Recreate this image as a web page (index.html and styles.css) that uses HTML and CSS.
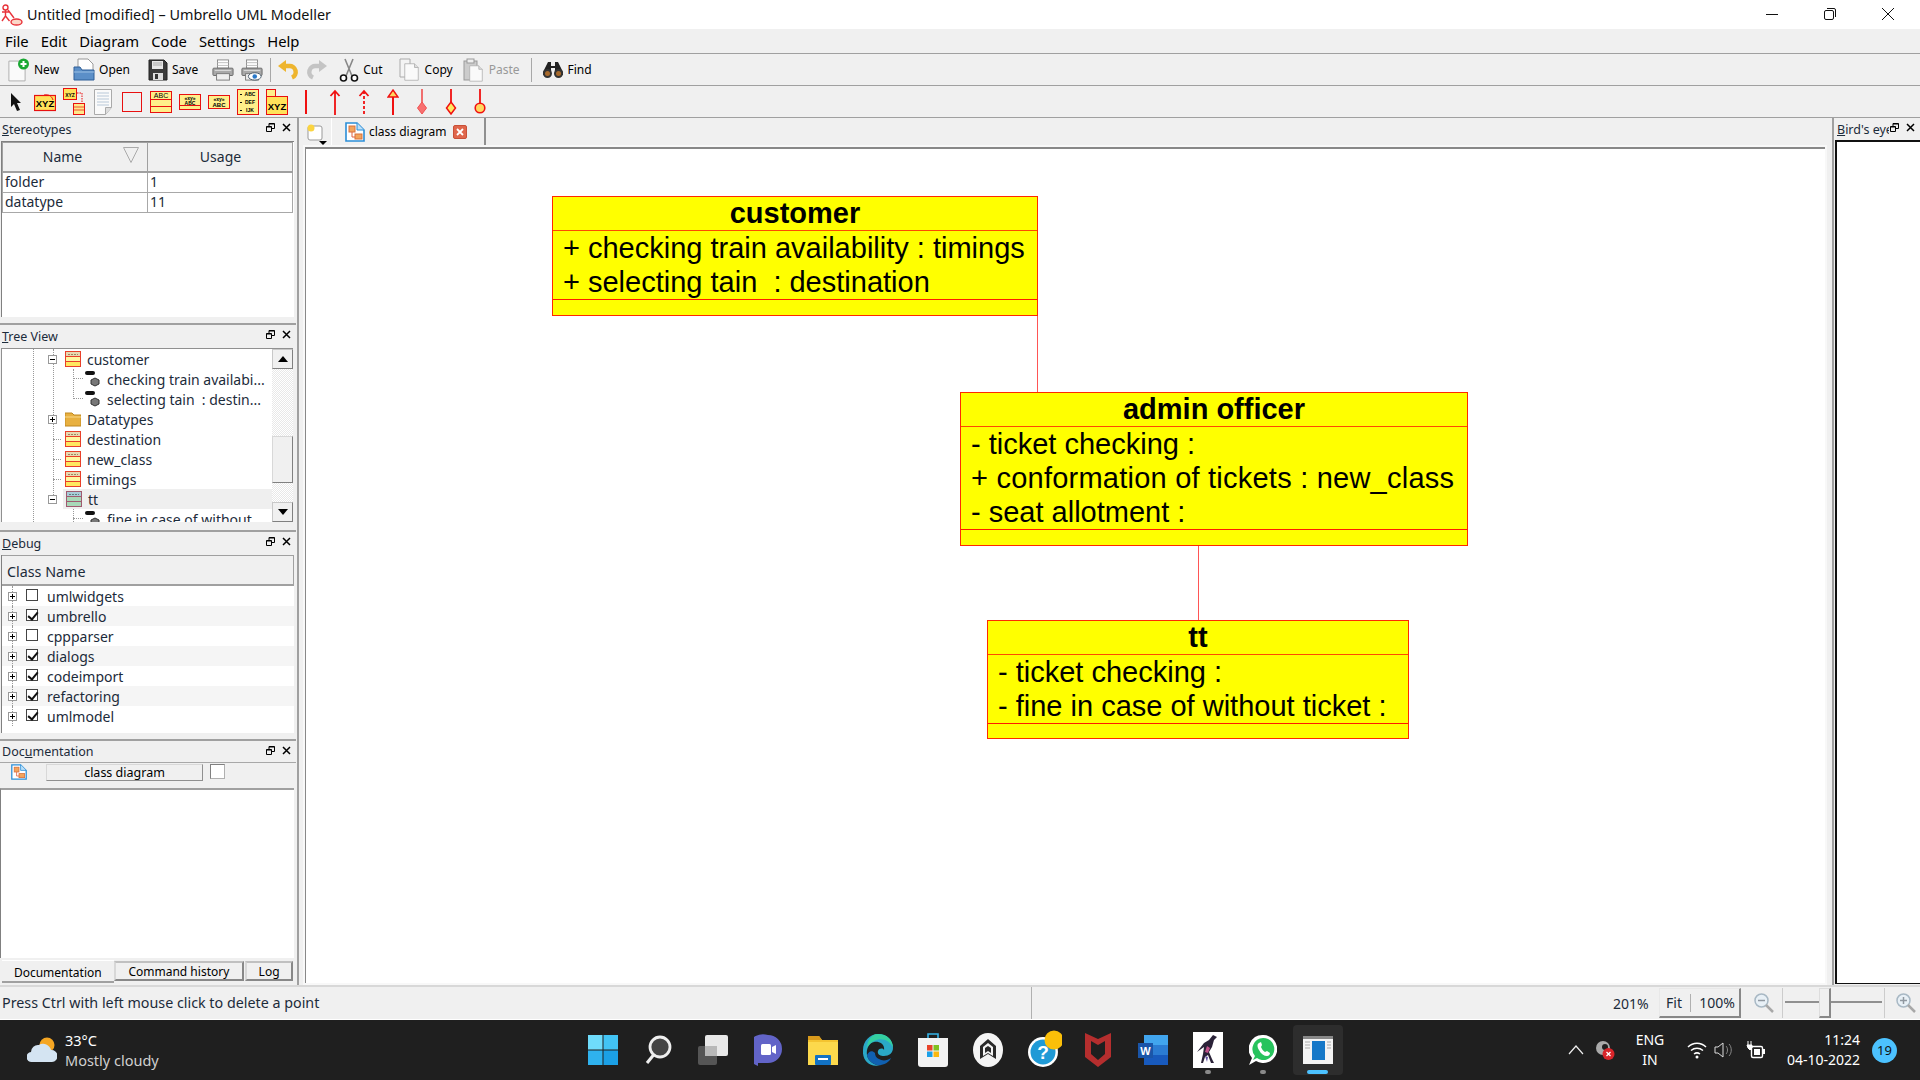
FILE: index.html
```html
<!DOCTYPE html>
<html lang="en">
<head>
<meta charset="utf-8">
<title>Untitled [modified] – Umbrello UML Modeller</title>
<link rel="stylesheet" href="styles.css">
</head>
<body>
<svg class="defs" width="0" height="0" aria-hidden="true">
  <symbol id="cls" viewBox="0 0 16 16"><rect x=".5" y=".5" width="15" height="15" fill="#fff7a0" stroke="#e8402a"/><rect x="1" y="1" width="14" height="4" fill="#e8d8b0"/><path d="M1 5.500h14M1 10.500h14" stroke="#e8402a"/><rect x="1" y="11" width="14" height="4" fill="#ffe860"/><path d="M3 3.500h10" stroke="#a08860" stroke-dasharray="2 1"/></symbol>
  <symbol id="clsg" viewBox="0 0 16 16"><rect x=".5" y=".5" width="15" height="15" fill="#a8d8b8" stroke="#a05a70"/><rect x="1" y="1" width="14" height="4" fill="#a8ccd8"/><path d="M1 5.500h14M1 10.500h14" stroke="#a05a70"/><path d="M3 3.500h10" stroke="#608080" stroke-dasharray="2 1"/></symbol>
  <symbol id="attr" viewBox="0 0 16 16"><rect x="0" y="0" width="10" height="4" rx="2" fill="#111"/><path d="M10 7l4 2v4l-4 2-4-2V9z" fill="#777" stroke="#333"/></symbol>
  <symbol id="plus" viewBox="0 0 9 9"><rect x=".5" y=".5" width="8" height="8" fill="#fff" stroke="#999"/><path d="M2 4.500h5M4.500 2v5" stroke="#000"/></symbol>
  <symbol id="minus" viewBox="0 0 9 9"><rect x=".5" y=".5" width="8" height="8" fill="#fff" stroke="#999"/><path d="M2 4.500h5" stroke="#000"/></symbol>
  <symbol id="diag" viewBox="0 0 20 20"><path d="M1 1h11l7 7v11H1z" fill="#fff" stroke="#2b8ed8" stroke-width="1.600"/><path d="M12 1v7h7" fill="#bde0f8" stroke="#2b8ed8"/><rect x="4" y="4" width="6" height="6" fill="#f2a45c" stroke="#d8703c"/><rect x="10" y="12" width="7" height="5" fill="#f2a45c" stroke="#d8703c"/><path d="M7 10v5h3" fill="none" stroke="#e06040"/></symbol>
  <symbol id="float" viewBox="0 0 9 9"><path d="M.5 3.500h5v5h-5zM3 3V.5h5.500v5H6" fill="none" stroke="#000"/><path d="M.5 4h5M3 1h5.500" stroke="#000"/></symbol>
  <symbol id="shut" viewBox="0 0 9 9"><path d="M1 1l7 7M8 1l-7 7" stroke="#000" stroke-width="1.500"/></symbol>
  <symbol id="page" viewBox="0 0 20 24"><path d="M1 1h13l5 5v17H1z" fill="#fafafa" stroke="#a8a8a8"/><path d="M14 1v5h5" fill="#ddd" stroke="#a8a8a8"/></symbol>
  <symbol id="printer" viewBox="0 0 24 24"><rect x="6" y="1" width="12" height="9" fill="#fff" stroke="#888"/><path d="M6 4h12M6 7h12" stroke="#bbb"/><rect x="1" y="10" width="22" height="8" rx="1" fill="#a8a8a8" stroke="#666"/><rect x="5" y="16" width="14" height="7" fill="#eee" stroke="#777"/><path d="M3 12.500h18" stroke="#ddd"/></symbol>
</svg>

<header class="titlebar">
  <svg class="app-icon" width="22" height="22" viewBox="0 0 22 22"><circle cx="4.500" cy="3.500" r="2.500" fill="none" stroke="#e8333a" stroke-width="1.400"/><path d="M4.500 6v6M1 8h7M1 17l3.500-5 4 5M7 6l6 8" fill="none" stroke="#e8333a" stroke-width="1.400"/><ellipse cx="15.500" cy="18" rx="5.500" ry="3" fill="#fbd7c8" stroke="#e8333a" stroke-width="1.400"/></svg>
  <span class="title-text">Untitled [modified] – Umbrello UML Modeller</span>
  <div class="win-controls">
    <svg width="12" height="12" viewBox="0 0 12 12"><path d="M0 6.500h12" stroke="#111"/></svg>
    <svg width="12" height="12" viewBox="0 0 12 12"><rect x=".5" y="2.500" width="9" height="9" rx="1.500" fill="none" stroke="#111"/><path d="M3 .5h7a1.500 1.500 0 0 1 1.500 1.500v7" fill="none" stroke="#111"/></svg>
    <svg width="12" height="12" viewBox="0 0 12 12"><path d="M0 0l12 12M12 0L0 12" stroke="#111"/></svg>
  </div>
</header>

<nav class="menubar">
  <span>File</span><span>Edit</span><span>Diagram</span><span>Code</span><span>Settings</span><span>Help</span>
</nav>

<div class="toolbar">
  <div class="tool t-new"><svg width="22" height="24" viewBox="0 0 22 24"><use href="#page" x="0" y="2" width="18" height="22"/><circle cx="15.500" cy="6" r="5.500" fill="#1aa833"/><path d="M12.500 6h6M15.500 3v6" stroke="#fff" stroke-width="2"/></svg><span>New</span></div>
  <div class="tool t-open"><svg width="22" height="24" viewBox="0 0 22 24"><path d="M5 1h10l5 5v9H5z" fill="#fff" stroke="#999"/><path d="M1 9h6l2 3h12v10H1z" fill="#5b8fc8" stroke="#2f5f98"/><path d="M1 14h20" stroke="#9cc0e4"/></svg><span>Open</span></div>
  <div class="tool t-save"><svg width="20" height="22" viewBox="0 0 20 22"><path d="M1 1h15l3 3v17H1z" fill="#3a3a3a" stroke="#222"/><rect x="4" y="2" width="11" height="8" fill="#e8e8e8"/><path d="M5 4h9M5 6h9" stroke="#aaa"/><rect x="5" y="14" width="10" height="7" fill="#ddd"/><rect x="7" y="15" width="3" height="5" fill="#333"/></svg><span>Save</span></div>
  <div class="tool t-print"><svg width="22" height="24" viewBox="0 0 24 24"><use href="#printer"/></svg></div>
  <div class="tool t-prev"><svg width="22" height="24" viewBox="0 0 24 24"><use href="#printer"/><ellipse cx="15" cy="19" rx="7" ry="4" fill="#fff" stroke="#456"/><circle cx="15" cy="19" r="2.500" fill="#2a78c8"/></svg></div>
  <i class="tsep"></i>
  <div class="tool t-undo"><svg width="22" height="22" viewBox="0 0 22 22"><path d="M7 7h5a6 6 0 0 1 3 11.500" fill="none" stroke="#eeb52e" stroke-width="4.500"/><path d="M1 7l8-6v12z" fill="#eeb52e"/></svg></div>
  <div class="tool t-redo"><svg width="22" height="22" viewBox="0 0 22 22"><path d="M15 7h-5a6 6 0 0 0-3 11.500" fill="none" stroke="#c4c4c4" stroke-width="4.500"/><path d="M21 7l-8-6v12z" fill="#c4c4c4"/></svg></div>
  <div class="tool t-cut"><svg width="20" height="24" viewBox="0 0 20 24"><path d="M6 1l7 17M14 1L7 18" stroke="#888" stroke-width="1.600"/><circle cx="4.500" cy="20" r="3" fill="#fff" stroke="#111" stroke-width="1.600"/><circle cx="15.500" cy="20" r="3" fill="#fff" stroke="#111" stroke-width="1.600"/></svg><span>Cut</span></div>
  <div class="tool t-copy"><svg width="20" height="24" viewBox="0 0 20 24"><path d="M1 1h10v18H1z" fill="#f4f4f4" stroke="#aaa"/><use href="#page" x="5" y="4" width="15" height="20"/></svg><span>Copy</span></div>
  <div class="tool t-paste dim"><svg width="20" height="24" viewBox="0 0 20 24"><rect x="1" y="3" width="13" height="19" fill="#ccc" stroke="#999"/><rect x="4" y="1" width="7" height="4" fill="#eee" stroke="#999"/><use href="#page" x="6" y="7" width="14" height="17"/></svg><span>Paste</span></div>
  <i class="tsep sep2"></i>
  <div class="tool t-find"><svg width="22" height="18" viewBox="0 0 22 18"><path d="M6 1h3v4h4V1h3l5 10v3H13V7H9v7H1v-3z" fill="#222"/><circle cx="5.500" cy="12.500" r="4.500" fill="#333"/><circle cx="16.500" cy="12.500" r="4.500" fill="#333"/><circle cx="5.500" cy="12.500" r="2.500" fill="#a86a2c"/><circle cx="16.500" cy="12.500" r="2.500" fill="#a86a2c"/></svg><span>Find</span></div>
</div>

<div class="toolbar2">
  <svg class="w-arrow" width="12" height="22" viewBox="0 0 12 22"><path d="M1 2v14l3-3 3 7 3-1-3-7h4z" fill="#111"/></svg>
  <svg width="22" height="20" viewBox="0 0 22 20"><rect x=".5" y="3.500" width="21" height="15" fill="#ffe25a" stroke="#e81010" stroke-width="1.200"/><path d="M10 3c6-1 8 2 9 5" fill="none" stroke="#e81010"/><text x="11" y="15" class="svgt b9">XYZ</text></svg>
  <svg width="22" height="27" viewBox="0 0 22 27"><rect x=".5" y=".5" width="13" height="11" fill="#ffe25a" stroke="#e81010"/><text x="7" y="8.500" class="svgt b5">XYZ</text><path d="M14 5h5v11" stroke="#e81010" fill="none" stroke-dasharray="1.500 1"/><rect x="10.500" y="15.500" width="11" height="11" fill="#ffe88a" stroke="#e81010"/><path d="M11 19h10M11 22h10" stroke="#e81010" stroke-width=".7"/></svg>
  <svg class="c18" width="18" height="26" viewBox="0 0 18 26"><path d="M.5.5h17v18l-6 7H.5z" fill="#fafafa" stroke="#aaa"/><path d="M3 4h12M3 7h12M3 10h12M3 13h12M3 16h12" stroke="#b8c8d8"/><path d="M11.500 25.500v-7h6" fill="#ddd" stroke="#aaa"/></svg>
  <svg class="c20" width="20" height="20" viewBox="0 0 20 20"><rect x=".5" y=".5" width="19" height="19" fill="#f0f0f0" stroke="#e81010"/></svg>
  <svg width="22" height="22" viewBox="0 0 22 22"><rect x=".5" y=".5" width="21" height="21" fill="#ffef8a" stroke="#e81010"/><path d="M0 8.500h22M0 15.500h22" stroke="#e81010"/><text x="11" y="7" class="svgt n7">ABC</text></svg>
  <svg width="22" height="16" viewBox="0 0 22 16"><rect x=".5" y=".5" width="21" height="15" fill="#ffef8a" stroke="#e81010"/><path d="M0 11.500h22" stroke="#e81010"/><text x="11" y="6" class="svgt b5">«xy»</text><text x="11" y="10.500" class="svgt b5">ABC</text></svg>
  <svg width="22" height="14" viewBox="0 0 22 14"><rect x=".5" y=".5" width="21" height="13" fill="#ffef8a" stroke="#e81010"/><text x="11" y="6" class="svgt b5">«xy»</text><text x="11" y="12" class="svgt b6">ABC</text></svg>
  <svg width="22" height="26" viewBox="0 0 22 26"><rect x=".5" y=".5" width="21" height="25" fill="#ffef8a" stroke="#e81010"/><text x="13" y="7" class="svgt b5">ABC</text><text x="13" y="15" class="svgt b5">DEF</text><text x="13" y="23" class="svgt b5">IJK</text><path d="M3 5.500h2M3 13.500h2M3 21.500h2" stroke="#111"/></svg>
  <svg width="22" height="26" viewBox="0 0 22 26"><rect x=".5" y=".5" width="9" height="7" fill="#ffef8a" stroke="#e81010"/><rect x=".5" y="7.500" width="21" height="18" fill="#ffe25a" stroke="#e81010"/><text x="11" y="21" class="svgt b9">XYZ</text></svg>
  <svg class="rel rel-first" width="12" height="26" viewBox="0 0 12 26"><path d="M6 1v24" stroke="#f01010" stroke-width="2"/></svg>
  <svg class="rel" width="12" height="26" viewBox="0 0 12 26"><path d="M6 2v24M1.500 7L6 2l4.500 5" stroke="#f01010" stroke-width="1.800" fill="none"/></svg>
  <svg class="rel" width="12" height="26" viewBox="0 0 12 26"><path d="M6 2v24" stroke="#f01010" stroke-width="1.800" stroke-dasharray="3 2"/><path d="M1.500 7L6 2l4.500 5" stroke="#f01010" stroke-width="1.800" fill="none"/></svg>
  <svg class="rel" width="12" height="26" viewBox="0 0 12 26"><path d="M6 8v18" stroke="#f01010" stroke-width="2"/><path d="M6 1l5 7H1z" fill="#ffd860" stroke="#f01010" stroke-width="1.400"/></svg>
  <svg class="rel" width="12" height="26" viewBox="0 0 12 26"><path d="M6 0v14" stroke="#f06060" stroke-width="1.800"/><path d="M6 13l4.500 6L6 25l-4.500-6z" fill="#f87070" stroke="#f05050"/></svg>
  <svg class="rel" width="12" height="26" viewBox="0 0 12 26"><path d="M6 0v14" stroke="#f01010" stroke-width="1.800"/><path d="M6 13l4.500 6L6 25l-4.500-6z" fill="#ffe860" stroke="#f01010" stroke-width="1.500"/></svg>
  <svg class="rel" width="12" height="26" viewBox="0 0 12 26"><path d="M6 0v14" stroke="#f01010" stroke-width="1.800"/><circle cx="6" cy="19" r="4.800" fill="#ffd860" stroke="#f01010" stroke-width="1.600"/></svg>
</div>

<main class="workspace">
  <aside class="dock-left">
    <section class="panel p-stereo">
      <div class="panel-title"><span><u>S</u>tereotypes</span><span class="panel-btns"><svg width="9" height="9"><use href="#float"/></svg><svg width="9" height="9"><use href="#shut"/></svg></span></div>
      <div class="panel-body">
        <table class="stereo">
          <thead><tr><th class="sorted">Name<svg class="sort" width="16" height="16" viewBox="0 0 16 16"><path d="M.5 .5h15L8 15.500z" fill="none" stroke="#aaa"/></svg></th><th>Usage</th></tr></thead>
          <tbody><tr><td>folder</td><td>1</td></tr><tr><td>datatype</td><td>11</td></tr></tbody>
        </table>
      </div>
    </section>

    <section class="panel p-tree">
      <div class="panel-title"><span><u>T</u>ree View</span><span class="panel-btns"><svg width="9" height="9"><use href="#float"/></svg><svg width="9" height="9"><use href="#shut"/></svg></span></div>
      <div class="tree">
        <div class="tree-list">
          <i class="vdot v1"></i><i class="vdot v2"></i><i class="vdot v3"></i><i class="vdot v4"></i>
          <div class="trow"><svg class="exp" width="9" height="9"><use href="#minus"/></svg><svg class="ic16" width="16" height="16"><use href="#cls"/></svg><span>customer</span></div>
          <div class="trow child"><svg class="ic16" width="16" height="16"><use href="#attr"/></svg><span>checking train availabi...</span></div>
          <div class="trow child"><svg class="ic16" width="16" height="16"><use href="#attr"/></svg><span>selecting tain  : destin...</span></div>
          <div class="trow"><svg class="exp" width="9" height="9"><use href="#plus"/></svg><svg class="ic16" width="16" height="16" viewBox="0 0 16 16"><path d="M0 2h7l2 2h7v11H0z" fill="#e8b040" stroke="#c08820"/><path d="M0 6h16" stroke="#f8d888"/></svg><span>Datatypes</span></div>
          <div class="trow leaf"><svg class="ic16" width="16" height="16"><use href="#cls"/></svg><span>destination</span></div>
          <div class="trow leaf"><svg class="ic16" width="16" height="16"><use href="#cls"/></svg><span>new_class</span></div>
          <div class="trow leaf"><svg class="ic16" width="16" height="16"><use href="#cls"/></svg><span>timings</span></div>
          <div class="trow current"><svg class="exp" width="9" height="9"><use href="#minus"/></svg><svg class="ic16" width="16" height="16"><use href="#clsg"/></svg><span>tt</span></div>
          <div class="trow child"><svg class="ic16" width="16" height="16"><use href="#attr"/></svg><span>fine in case of without</span></div>
        </div>
        <div class="scrollbar">
          <div class="sb-btn"><svg width="10" height="6" viewBox="0 0 10 6"><path d="M5 0l5 6H0z" fill="#000"/></svg></div>
          <div class="sb-track"><div class="sb-thumb"></div></div>
          <div class="sb-btn"><svg width="10" height="6" viewBox="0 0 10 6"><path d="M0 0h10L5 6z" fill="#000"/></svg></div>
        </div>
      </div>
    </section>

    <section class="panel p-debug">
      <div class="panel-title"><span><u>D</u>ebug</span><span class="panel-btns"><svg width="9" height="9"><use href="#float"/></svg><svg width="9" height="9"><use href="#shut"/></svg></span></div>
      <div class="debug">
        <div class="debug-head">Class Name</div>
        <div class="drow"><svg class="exp" width="9" height="9"><use href="#plus"/></svg><i class="check"></i><span>umlwidgets</span></div>
        <div class="drow alt"><svg class="exp" width="9" height="9"><use href="#plus"/></svg><i class="check on"></i><span>umbrello</span></div>
        <div class="drow"><svg class="exp" width="9" height="9"><use href="#plus"/></svg><i class="check"></i><span>cppparser</span></div>
        <div class="drow alt"><svg class="exp" width="9" height="9"><use href="#plus"/></svg><i class="check on"></i><span>dialogs</span></div>
        <div class="drow"><svg class="exp" width="9" height="9"><use href="#plus"/></svg><i class="check on"></i><span>codeimport</span></div>
        <div class="drow alt"><svg class="exp" width="9" height="9"><use href="#plus"/></svg><i class="check on"></i><span>refactoring</span></div>
        <div class="drow"><svg class="exp" width="9" height="9"><use href="#plus"/></svg><i class="check on"></i><span>umlmodel</span></div>
      </div>
    </section>

    <section class="panel p-doc">
      <div class="panel-title doc-title"><span>Doc<u>u</u>mentation</span><span class="panel-btns"><svg width="9" height="9"><use href="#float"/></svg><svg width="9" height="9"><use href="#shut"/></svg></span></div>
      <div class="doc-bar"><svg width="16" height="16"><use href="#diag"/></svg><span class="doc-name">class diagram</span><i class="doc-check"></i></div>
      <div class="doc-text"></div>
      <div class="doc-tabs"><span class="dt active">Documentation</span><span class="dt d2">Command history</span><span class="dt d3">Log</span></div>
    </section>
  </aside>

  <div class="splitter"></div>

  <section class="center">
    <div class="tabbar">
      <svg class="new-tab" width="22" height="24" viewBox="0 0 22 24"><rect x="2" y="4" width="14" height="14" rx="2" fill="#fff" stroke="#999"/><circle cx="5" cy="6" r="3.500" fill="#fbd440"/><path d="M13 19h8l-4 4z" fill="#000"/></svg>
      <div class="doc-tab"><svg width="20" height="20"><use href="#diag"/></svg><span>class diagram</span><svg class="tab-close" width="14" height="14" viewBox="0 0 14 14"><rect x=".5" y=".5" width="13" height="13" rx="1.500" fill="#e0664c" stroke="#c85038"/><path d="M4 4l6 6M10 4l-6 6" stroke="#fff" stroke-width="1.800"/></svg></div>
    </div>
    <div class="canvas">
      <i class="assoc a1"></i><i class="assoc a2"></i>
      <div class="uml n-customer">
        <div class="uml-name">customer</div>
        <div class="uml-attrs"><div>+ checking train availability : timings</div><div>+ selecting tain  : destination</div></div>
        <div class="uml-ops"></div>
      </div>
      <div class="uml n-admin">
        <div class="uml-name">admin officer</div>
        <div class="uml-attrs"><div>- ticket checking :</div><div class="wide">+ conformation of tickets : new_class</div><div>- seat allotment :</div></div>
        <div class="uml-ops"></div>
      </div>
      <div class="uml n-tt">
        <div class="uml-name">tt</div>
        <div class="uml-attrs"><div>- ticket checking :</div><div>- fine in case of without ticket :</div></div>
        <div class="uml-ops"></div>
      </div>
    </div>
  </section>

  <div class="splitter s-right"></div>

  <aside class="dock-right">
    <div class="panel-title birds"><span class="birds-name"><u>B</u>ird's eye</span><span class="panel-btns"><svg width="9" height="9"><use href="#float"/></svg><svg width="9" height="9"><use href="#shut"/></svg></span></div>
    <div class="birds-view"></div>
  </aside>
</main>

<footer class="statusbar">
  <div class="status-msg">Press Ctrl with left mouse click to delete a point</div>
  <div class="status-zoom">
    <span class="pct">201%</span>
    <div class="zoom-btns"><span>Fit</span><i></i><span>100%</span></div>
    <svg class="zm" width="22" height="22" viewBox="0 0 22 22"><circle cx="8.500" cy="8.500" r="6.500" fill="#e8f0f6" stroke="#a8b8c4" stroke-width="1.500"/><path d="M5 8.500h7" stroke="#9098a0" stroke-width="1.500"/><path d="M13 13l7 7" stroke="#a8a8a8" stroke-width="2.500"/></svg>
    <div class="slider"><i class="track"></i><i class="handle"></i></div>
    <svg class="zm" width="22" height="22" viewBox="0 0 22 22"><circle cx="8.500" cy="8.500" r="6.500" fill="#e8f0f6" stroke="#a8b8c4" stroke-width="1.500"/><path d="M5 8.500h7M8.500 5v7" stroke="#9098a0" stroke-width="1.500"/><path d="M13 13l7 7" stroke="#a8a8a8" stroke-width="2.500"/></svg>
  </div>
</footer>

<footer class="taskbar">
  <div class="weather">
    <svg width="30" height="28" viewBox="0 0 30 28"><circle cx="20" cy="9" r="7.500" fill="#f5a623"/><path d="M5 26a5 5 0 0 1-1-10 7 7 0 0 1 8-7 8 8 0 0 1 12 5 6 6 0 0 1 1 12z" fill="#d4e4f2"/></svg>
    <div class="w-text"><div>33°C</div><div class="w-sub">Mostly cloudy</div></div>
  </div>
  <div class="apps">
    <div class="app"><svg width="30" height="30" viewBox="0 0 30 30"><rect width="14.500" height="14.500" fill="#6fdcfb"/><rect x="15.500" width="14.500" height="14.500" fill="#42c4f5"/><rect y="15.500" width="14.500" height="14.500" fill="#2fb2ee"/><rect x="15.500" y="15.500" width="14.500" height="14.500" fill="#1ba0e6"/></svg></div>
    <div class="app"><svg width="28" height="30" viewBox="0 0 28 30"><circle cx="16" cy="12" r="10" fill="#444" stroke="#eee" stroke-width="2.800"/><path d="M9.500 20L3 28" stroke="#eee" stroke-width="3"/></svg></div>
    <div class="app"><svg width="30" height="30" viewBox="0 0 30 30"><rect y="11" width="19" height="19" rx="2" fill="#555"/><rect x="7" width="23" height="21" rx="2" fill="#e8e8e8"/><rect x="7" y="11" width="12" height="10" fill="#b8b8b8"/></svg></div>
    <div class="app"><svg width="28" height="32" viewBox="0 0 28 32"><path d="M14 1a14 14 0 0 1 0 28H4v3A14 14 0 0 1 14 1z" fill="#6264c8"/><rect x="7" y="10" width="10" height="11" rx="1.500" fill="#fff"/><path d="M18 13l4-2v9l-4-2z" fill="#fff"/></svg></div>
    <div class="app"><svg width="30" height="30" viewBox="0 0 30 30"><path d="M0 1h11l3 4h16v25H0z" fill="#f4c430"/><path d="M0 1h11l3 4H0z" fill="#d99a1c"/><rect y="7" width="30" height="23" fill="#fcd94c"/><rect x="7" y="20" width="16" height="10" rx="1" fill="#1272c4"/><rect x="10" y="23" width="10" height="2" fill="#fff"/></svg></div>
    <div class="app"><svg width="30" height="32" viewBox="0 0 30 32"><path d="M15 0c9 0 15 6 15 14 0 5-4 8-9 8-4 0-7-2-6-5 1-3 5-3 6-1 1-6-5-9-10-8C6 9 3 15 4 21c1 6 7 11 14 10C7 34-1 27 0 16 0 7 7 0 15 0z" fill="#2aa8c8"/><path d="M4 21c1 6 7 11 14 10 5-1 9-4 10-7-4 3-9 3-12 1-3-1-4-4-4-6-3-3-6-2-8 2z" fill="#1060b0"/><path d="M15 0c9 0 15 6 15 14-3-8-12-11-19-7C7 9 4 12 3 17 4 7 8 0 15 0z" fill="#34d0a0"/></svg></div>
    <div class="app"><svg width="30" height="34" viewBox="0 0 30 34"><path d="M10 5V1h10v4" fill="none" stroke="#35b4e8" stroke-width="1.600"/><path d="M0 5h30v26a3 3 0 0 1-3 3H3a3 3 0 0 1-3-3z" fill="#f2f2f2"/><rect x="9" y="12" width="5.500" height="5.500" fill="#e8432a"/><rect x="15.500" y="12" width="5.500" height="5.500" fill="#80c020"/><rect x="9" y="18.500" width="5.500" height="5.500" fill="#1ca0e8"/><rect x="15.500" y="18.500" width="5.500" height="5.500" fill="#fbb810"/></svg></div>
    <div class="app"><svg width="30" height="34" viewBox="0 0 30 34"><ellipse cx="15" cy="17" rx="15" ry="17" fill="#f4f4f4"/><path d="M7 26V13l8-7 8 7v13l-8-5z" fill="#2a2a2a"/><path d="M10 23V14l5-4 5 4v9l-5-3z" fill="#f4f4f4"/><path d="M12 20v-5l3-2 3 2v5l-3-2z" fill="#2a2a2a"/></svg></div>
    <div class="app help"><svg width="34" height="40" viewBox="0 0 34 40"><circle cx="15" cy="22" r="15" fill="#fff"/><circle cx="15" cy="22" r="12.500" fill="#1f9ad6"/><text x="15" y="29" class="svgt q">?</text><circle cx="26" cy="10" r="9.500" fill="#fbbf09"/></svg></div>
    <div class="app"><svg width="26" height="34" viewBox="0 0 26 34"><path d="M0 0l13 6 13-6v24l-13 10L0 24z" fill="#b52e2e"/><path d="M6 8l7 4 7-4v13l-7 6-7-6z" fill="#1f1f1f"/></svg></div>
    <div class="app"><svg width="30" height="30" viewBox="0 0 30 30"><rect x="6" width="24" height="10" fill="#41a5ee"/><rect x="6" y="10" width="24" height="10" fill="#2b7cd3"/><rect x="6" y="20" width="24" height="10" fill="#185abd"/><rect y="8" width="15" height="15" fill="#1a55a8"/><text x="7.500" y="20" class="svgt wl">W</text></svg></div>
    <div class="app dot"><svg width="30" height="36" viewBox="0 0 30 36"><rect width="30" height="36" fill="#fff"/><path d="M20 3l4 2-3 3-2 7-3 5 3 7 2 4h-3l-3-8-3 2-2 6H8l2-9 1-7-7 5 7-9 5-3z" fill="#2a2238"/><path d="M14 14l3 2-2 5-3-1z" fill="#c0508a"/><path d="M12 24l3 1-1 5z" fill="#6a58a8"/></svg></div>
    <div class="app dot"><svg width="28" height="30" viewBox="0 0 28 30"><path d="M14 0a14 14 0 1 1-7 26L0 30l3-7A14 14 0 0 1 14 0z" fill="#fff"/><path d="M14 3a11 11 0 1 1-6 20l-4 2 2-4A11 11 0 0 1 14 3z" fill="#27c35d"/><path d="M10 8c-2 1-2 4 0 7 2 4 5 6 8 6 2 0 3-2 3-3l-3-2-2 1c-2-1-3-3-4-5l1-2-1-3z" fill="#fff"/></svg></div>
    <div class="app active"><svg width="30" height="28" viewBox="0 0 30 28"><rect width="30" height="28" fill="#f4f4f4"/><rect width="30" height="3" fill="#888"/><rect x="9" y="5" width="13" height="19" fill="#1678c8"/><path d="M2 6h5M2 9h5M2 12h5M24 6h4M24 9h4M24 12h4" stroke="#aaa"/></svg></div>
  </div>
  <div class="tray">
    <svg class="chev" width="16" height="10" viewBox="0 0 16 10"><path d="M1 9l7-8 7 8" fill="none" stroke="#eee" stroke-width="1.200"/></svg>
    <svg class="av" width="20" height="22" viewBox="0 0 20 22"><circle cx="8" cy="9" r="7" fill="#aaa"/><circle cx="10" cy="8" r="3" fill="#1f1f1f"/><circle cx="13.500" cy="15" r="6" fill="#d8252a"/><path d="M11.500 13l4 4M15.500 13l-4 4" stroke="#fff" stroke-width="1.300"/></svg>
    <div class="lang"><div>ENG</div><div>IN</div></div>
    <svg class="wifi" width="20" height="18" viewBox="0 0 20 18"><path d="M1 6c5-5 13-5 18 0M4 9.500c3.500-3 8.500-3 12 0M7 13c2-1.500 4-1.500 6 0" fill="none" stroke="#fff" stroke-width="1.500"/><circle cx="10" cy="16" r="1.500" fill="#fff"/></svg>
    <svg class="vol" width="20" height="18" viewBox="0 0 20 18"><path d="M1 6h3l5-4v14l-5-4H1z" fill="none" stroke="#ddd"/><path d="M12 5c2 2 2 6 0 8M15 3c3 3 3 9 0 12" fill="none" stroke="#888"/></svg>
    <svg class="batt" width="20" height="18" viewBox="0 0 20 18"><rect x="5.500" y="5.500" width="11" height="11" rx="1.500" fill="none" stroke="#fff" stroke-width="1.400"/><rect x="8" y="8" width="6" height="6" fill="#fff"/><rect x="17" y="8" width="2" height="5" fill="#fff"/><path d="M2 0v4M5 0v4M1 4h5v3l-2 2-2-2z" fill="#fff" stroke="#fff"/></svg>
    <div class="clock"><div>11:24</div><div>04-10-2022</div></div>
    <div class="badge">19</div>
  </div>
</footer>
</body>
</html>
```

FILE: styles.css
```css
* { box-sizing: border-box; }
html, body { margin: 0; padding: 0; }
body {
  width: 1920px; height: 1080px; overflow: hidden;
  display: flex; flex-direction: column;
  background: #f0f0f0; color: #000;
  font: 13.5px "Noto Sans", "Open Sans", sans-serif;
}
svg { display: block; flex: none; }
.defs { position: absolute; }
i { display: block; font-style: normal; }

.titlebar { height: 29px; flex: none; background: #fff; display: flex; align-items: center; padding-left: 1px; }
.app-icon { margin-right: 4px; }
.title-text { font-size: 14.4px; color: #111; }
.win-controls { margin-left: auto; display: flex; padding-right: 3px; }
.win-controls svg { margin: 0 23px 1px 23px; }

.menubar { height: 25px; flex: none; display: flex; align-items: center; padding-left: 5px; gap: 12px; border-bottom: 1px solid #a0a0a0; font-size: 14.8px; }

.toolbar { height: 32px; flex: none; display: flex; align-items: center; padding-left: 8px; border-bottom: 1px solid #a0a0a0; font-size: 12px; }
.tool { display: flex; align-items: center; gap: 4px; flex: none; }
.t-open { margin-left: 14px; } .t-save { margin-left: 18px; } .t-print { margin-left: 14px; } .t-prev { margin-left: 7px; }
.tsep { width: 1px; height: 24px; background: #a8a8a8; margin: 0 6px 0 7px; }
.t-redo { margin-left: 7px; } .t-cut { margin-left: 11px; gap: 4px; } .t-copy { margin-left: 16px; gap: 6px; }
.t-paste { margin-left: 10px; gap: 6px; }
.dim { color: #999; }
.sep2 { margin: 0 10px 0 11px; }

.toolbar2 { height: 32px; flex: none; display: flex; align-items: center; padding-left: 10px; gap: 7px; border-bottom: 1px solid #a0a0a0; }
.w-arrow { margin-right: 5px; }
.c18 { margin: 0 2px; }
.c20 { margin: 0 1px; }
.rel { margin-left: 10px; }
.rel-first { margin-left: 5px; }
.svgt { text-anchor: middle; font-family: "Liberation Sans", sans-serif; fill: #000; }
.b9 { font-size: 9.500px; font-weight: 700; }
.b5 { font-size: 5px; font-weight: 700; }
.b6 { font-size: 6px; font-weight: 700; }
.n7 { font-size: 7px; }
.q { font-size: 19px; font-weight: 700; fill: #fff; }
.wl { font-size: 11px; font-weight: 700; fill: #fff; }

.workspace { flex: 1; min-height: 0; display: flex; }
.dock-left { width: 296px; flex: none; display: flex; flex-direction: column; }
.panel { display: flex; flex-direction: column; flex: none; border-bottom: 2px solid #a0a0a0; }
.p-stereo { height: 207px; }
.p-tree { height: 207px; }
.p-debug { height: 209px; }
.p-doc { flex: 1; border-bottom: 0; min-height: 0; }
.panel-title { height: 22px; flex: none; display: flex; align-items: center; justify-content: space-between; padding: 0 5px 0 2px; font-size: 12.5px; color: #1c2b3a; }
.panel-btns { display: flex; gap: 7px; margin-bottom: 3px; }
.panel-body { flex: 1; background: #fff; margin: 1px 2px 6px 1px; border-left: 1px solid #808080; border-top: 1px solid #808080; }

.stereo { width: 291px; table-layout: fixed; border-collapse: collapse; font-size: 14px; }
.stereo th { height: 29px; font-weight: 400; background: #f0f0f0; border: 1px solid #a0a0a0; border-bottom-width: 2px; border-top-width: 1px; position: relative; padding-right: 26px; color: #1c2b3a; }
.stereo th + th { padding-right: 0; }
.stereo td { height: 20px; padding: 0 0 1px 2px; border: 1px solid #a8a8a8; line-height: 18px; color: #1c2b3a; }
.sort { position: absolute; right: 8px; top: 4px; }

.tree { flex: 1; min-height: 0; margin: 1px 3px 8px 1px; background: #fff; border: 1px solid #909090; border-right: 0; border-bottom: 0; display: flex; overflow: hidden; }
.tree-list { flex: 1; position: relative; font-size: 14px; color: #1c2b3a; }
.vdot { position: absolute; width: 0; border-left: 1px dotted #999; }
.v1 { left: 31px; top: 0; bottom: 0; }
.v2 { left: 51px; top: 0; height: 150px; }
.v3 { left: 71px; top: 20px; height: 30px; }
.v4 { left: 71px; top: 160px; bottom: 0; }
.trow { height: 20px; display: flex; align-items: center; padding-left: 47px; position: relative; white-space: pre; margin-left: -1px; }
.trow .ic16 { margin-left: 8px; margin-right: 6px; }
.trow .exp { position: relative; z-index: 1; }
.leaf { padding-left: 56px; }
.leaf::before { content: ""; position: absolute; left: 52px; top: 10px; width: 8px; border-top: 1px dotted #999; }
.child { padding-left: 76px; }
.child::before { content: ""; position: absolute; left: 72px; top: 9px; width: 10px; border-top: 1px dotted #999; }
.current { background: #efefef; margin-left: 61px; padding-left: 0; }
.current .exp { position: absolute; left: -15px; }
.current .ic16 { margin-left: 3px; }
.scrollbar { width: 21px; flex: none; display: flex; flex-direction: column; background: #f4f4f4; }
.sb-btn { height: 20px; flex: none; background: #f0f0f0; border: 1px solid #c8c8c8; border-right-color: #808080; border-bottom-color: #808080; display: flex; align-items: center; justify-content: center; }
.sb-track { flex: 1; background: repeating-conic-gradient(#fff 0 25%, #e8e8e8 0 50%) 0 0 / 2px 2px; padding-top: 67px; }
.sb-thumb { height: 47px; background: #f0f0f0; border: 1px solid #d8d8d8; border-right-color: #808080; border-bottom-color: #808080; }

.debug { flex: 1; background: #fff; margin: 1px 2px 6px 1px; border-left: 1px solid #808080; min-height: 0; font-size: 14px; color: #1c2b3a; }
.debug-head { height: 31px; background: #f0f0f0; border: 1px solid #a0a0a0; border-bottom-width: 2px; border-left: 0; padding: 6px 5px 0 5px; font-size: 14.3px; line-height: 19px; }
.drow { height: 20px; display: flex; align-items: center; padding-left: 6px; position: relative; }
.drow::before { content: ""; position: absolute; left: 10px; top: 0; bottom: 0; border-left: 1px dotted #999; }
.drow .exp { position: relative; z-index: 1; }
.alt { background: #f5f5f5; }
.check { width: 12px; height: 12px; border: 1px solid #444; background: #fff; margin-left: 9px; margin-right: 9px; margin-top: -2px; position: relative; }
.check.on::after { content: ""; position: absolute; left: 3px; top: 0; width: 4px; height: 8px; border: solid #111; border-width: 0 2px 2px 0; transform: rotate(40deg); }

.doc-title { border-bottom: 1px solid #a8a8a8; }
.doc-bar { height: 25px; flex: none; display: flex; align-items: flex-start; padding: 1px 0 0 11px; }
.doc-name { width: 157px; height: 17px; margin-left: 19px; background: #f0f0f0; border: 1px solid #d8d8d8; border-right-color: #909090; border-bottom-color: #909090; font-size: 12.5px; text-align: center; line-height: 15px; }
.doc-check { width: 15px; height: 15px; margin-left: 7px; background: #fff; border: 1px solid #b0b0b0; border-top-color: #808080; border-left-color: #808080; }
.doc-text { flex: 1; background: #fff; margin-right: 2px; border-top: 2px solid #a0a0a0; border-left: 1px solid #808080; }
.doc-tabs { height: 27px; flex: none; display: flex; padding: 2px 3px 0 2px; font-size: 12px; }
.dt { height: 20px; margin-top: 1px; background: #f0f0f0; border: 2px solid #888; border-top-color: #c0c0c0; border-left-color: #d8d8d8; display: flex; align-items: center; justify-content: center; }
.dt.active { width: 112px; height: 23px; margin-top: 0; border: 0; border-top: 1px solid #fff; border-bottom: 2px solid #a0a0a0; padding-top: 2px; }
.d2 { width: 131px; } .d3 { width: 48px; margin-left: 1px; }

.splitter { width: 8px; flex: none; border-left: 2px solid #a0a0a0; margin-left: 1px; }
.s-right { width: 5px; margin-left: 0; border-left: 0; border-right: 2px solid #a0a0a0; margin-right: 1px; }

.center { width: 1524px; flex: none; display: flex; flex-direction: column; min-width: 0; }
.tabbar { height: 29px; flex: none; display: flex; align-items: flex-end; }
.new-tab { margin: 0 3px 1px 1px; }
.doc-tab { width: 155px; height: 29px; background: #f0f0f0; display: flex; align-items: center; padding: 0 0 2px 13px; gap: 4px; border-left: 1px solid #fff; border-right: 2px solid #909090; font-size: 12px; }
.tab-close { margin-left: 3px; }
.canvas { flex: 1; margin-right: 4px; margin-bottom: 2px; background: #fff; position: relative; border-top: 2px solid #888; border-left: 1px solid #888; outline: 2px solid #f8f8f8; }

.uml { position: absolute; background: #ff0; border: 1px solid #ff2a00; font: 29px/34px "Liberation Sans", sans-serif; color: #000; white-space: pre; display: flex; flex-direction: column; }
.uml-name { height: 34px; text-align: center; font-weight: 700; border-bottom: 1px solid #ff4a00; flex: none; line-height: 33px; }
.uml-attrs { flex: none; padding-left: 10px; border-bottom: 1px solid #ff1a00; }
.uml-attrs div { height: 34px; }
.wide { letter-spacing: .23px; }
.uml-ops { flex: 1; }
.n-customer { left: 246px; top: 47px; width: 486px; height: 120px; }
.n-admin { left: 654px; top: 243px; width: 508px; height: 154px; }
.n-tt { left: 681px; top: 471px; width: 422px; height: 119px; }
.assoc { position: absolute; width: 1px; background: #f55; }
.a1 { left: 731px; top: 167px; height: 76px; }
.a2 { left: 892px; top: 397px; height: 74px; }

.dock-right { flex: 1; display: flex; flex-direction: column; min-width: 0; }
.birds { position: relative; }
.birds-name { width: 52px; overflow: hidden; white-space: nowrap; }
.birds-view { flex: 1; background: #fff; border: 2px solid #111; border-right: 0; border-bottom-width: 1px; margin-bottom: 1px; }

.statusbar { height: 35px; flex: none; display: flex; border-top: 2px solid #d8d8d8; border-bottom: 1px solid #fff; }
.status-msg { width: 1032px; flex: none; padding: 6px 0 0 2px; font-size: 14.3px; border-right: 1px solid #b0b0b0; color: #1c2b3a; }
.status-zoom { flex: 1; display: flex; align-items: center; padding-left: 581px; }
.pct { width: 46px; font-size: 14px; color: #1c2b3a; }
.zoom-btns { width: 82px; height: 30px; display: flex; align-items: center; justify-content: space-around; font-size: 14px; border: 1px solid #e8e8e8; border-right: 2px solid #888; border-bottom: 2px solid #888; color: #1c2b3a; padding-left: 2px; }
.zoom-btns i { width: 1px; height: 18px; background: #b0b0b0; }
.zm { margin-left: 12px; }
.zm:last-child { margin-left: 10px; }
.slider { width: 103px; height: 30px; margin-left: 7px; position: relative; border-left: 1px solid #ccc; border-right: 1px solid #ccc; }
.track { position: absolute; left: 2px; right: 2px; top: 13px; height: 2px; background: #909090; }
.handle { position: absolute; left: 36px; top: 0; width: 12px; height: 30px; background: #f0f0f0; border: 1px solid #ddd; border-right: 2px solid #888; border-bottom: 2px solid #888; }

.taskbar { height: 60px; flex: none; background: #1f1f1f; display: flex; align-items: center; color: #fff; font-size: 14.5px; }
.weather { width: 575px; flex: none; display: flex; align-items: center; padding-left: 27px; gap: 8px; }
.w-text { line-height: 20px; }
.w-sub { color: #d0d0d0; }
.apps { display: flex; flex: none; align-items: center; }
.app { width: 55px; height: 42px; display: flex; align-items: center; justify-content: center; position: relative; }
.help svg { margin-left: 4px; }
.dot::after { content: ""; position: absolute; left: 25px; bottom: -3px; width: 6px; height: 4px; border-radius: 2px; background: #8a8a8a; }
.app.active { width: 50px; margin: 0 3px; height: 50px; background: #2d2d2d; border-radius: 4px; }
.app.active::after { content: ""; position: absolute; left: 14px; bottom: 1px; width: 21px; height: 4px; border-radius: 2px; background: #4cc2ff; }
.tray { flex: 1; display: flex; align-items: center; padding-left: 222px; }
.av { margin-left: 11px; }
.lang { width: 40px; margin-left: 15px; text-align: center; line-height: 20px; font-size: 14px; }
.wifi { margin-left: 17px; }
.vol { margin-left: 7px; }
.batt { margin-left: 12px; }
.clock { width: 92px; text-align: right; line-height: 20px; font-size: 14px; margin-left: 2px; }
.badge { width: 25px; height: 25px; border-radius: 50%; background: #4cc2ff; color: #111; font-size: 13px; text-align: center; line-height: 25px; margin-left: 12px; }
```
